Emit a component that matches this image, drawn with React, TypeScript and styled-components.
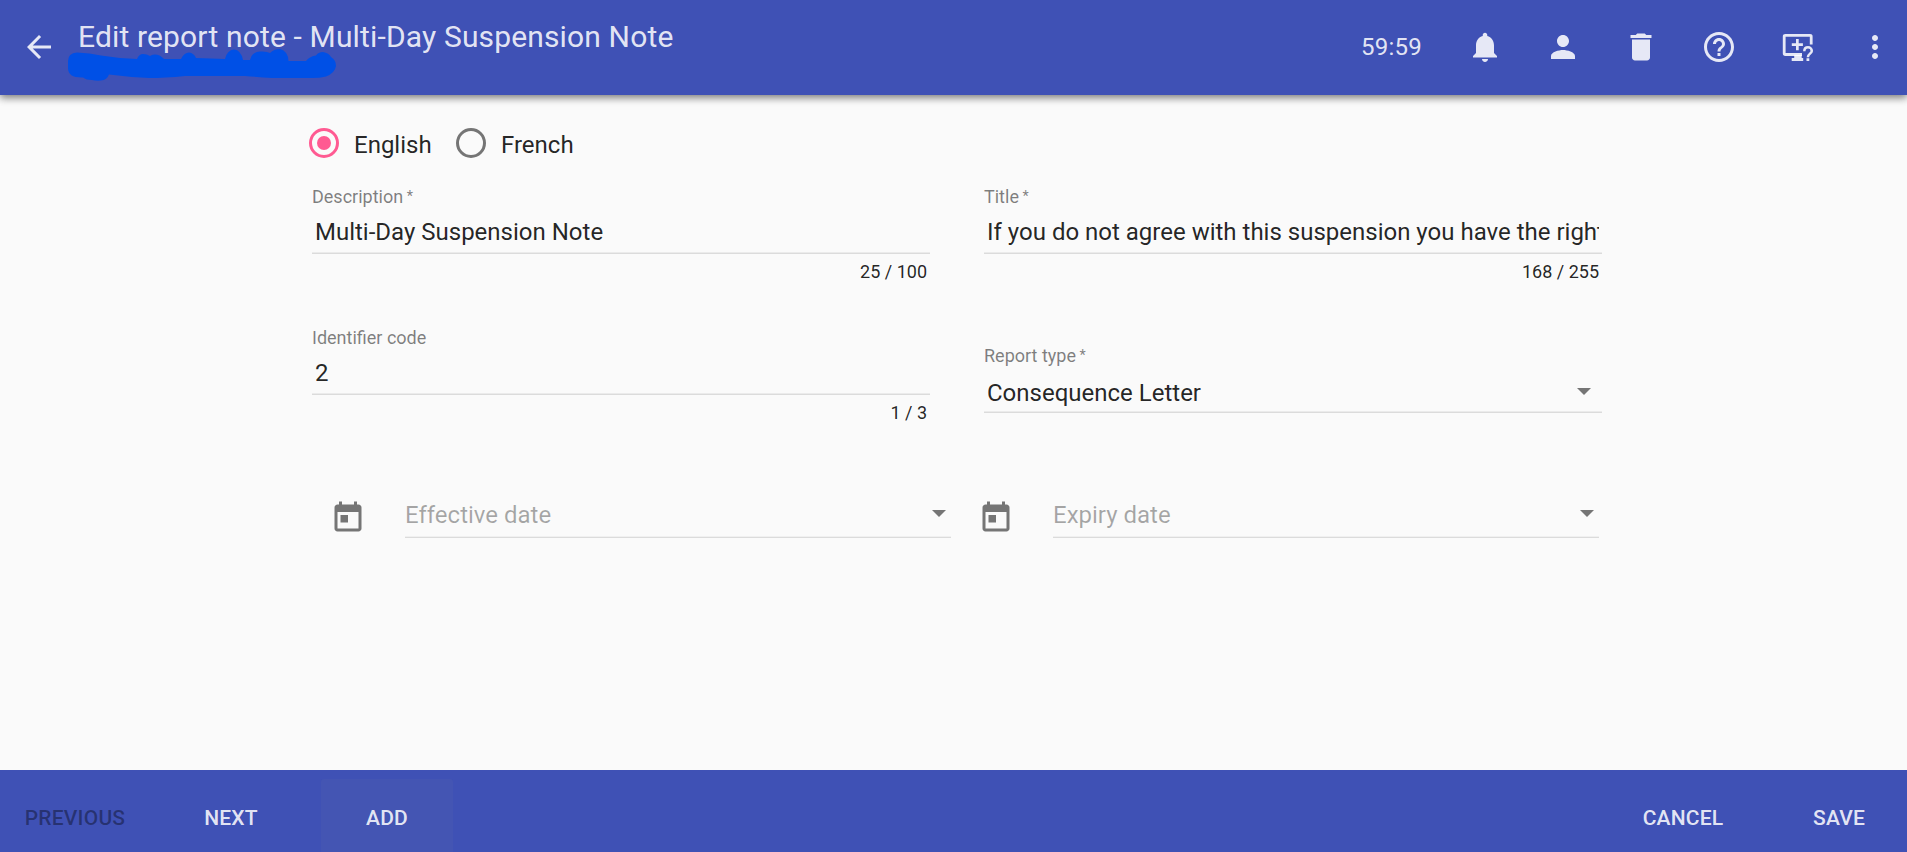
import React from "react";
import styled, { createGlobalStyle } from "styled-components";

const GlobalStyle = createGlobalStyle`
  * { box-sizing: border-box; }
  html, body { margin: 0; padding: 0; }
  body { font-family: Roboto, "Liberation Sans", sans-serif; background: #fafafa; overflow: hidden; }
`;

const Page = styled.div`
  display: flex;
  flex-direction: column;
  height: 852px;
  background: #fafafa;
  color: rgba(0, 0, 0, 0.87);
  overflow: hidden;
`;

const Toolbar = styled.header`
  position: relative;
  z-index: 1;
  display: flex;
  flex: 0 0 95px;
  padding: 0 14px 0 21px;
  background: #3f51b5;
  color: rgba(255, 255, 255, 0.87);
  box-shadow: 0 2px 8px rgba(0, 0, 0, 0.4), 0 3px 8px rgba(0, 0, 0, 0.2);
`;

const IconButton = styled.button`
  display: flex;
  flex: none;
  width: 36px;
  height: 36px;
  margin: 29px 0 0;
  padding: 0;
  border: 0;
  background: none;
  color: inherit;
`;

const Icon = styled.svg`
  display: block;
  width: 36px;
  height: 36px;
  fill: currentColor;
`;

const TitleBlock = styled.div`
  position: relative;
  flex: 1;
  padding: 19px 0 0 21px;
`;

const Title = styled.h1`
  margin: 0;
  font-size: 30px;
  font-weight: 400;
  line-height: 36px;
  letter-spacing: 0.15px;
  white-space: nowrap;
`;

const Scribble = styled.svg`
  position: absolute;
  left: 8px;
  top: 46px;
  width: 280px;
  height: 40px;
  fill: #0050e6;
`;

const Actions = styled.div`
  display: flex;
  gap: 42px;
`;

const Timer = styled.span`
  padding-top: 32px;
  font-size: 24px;
  line-height: 30px;
  letter-spacing: 0.24px;
  margin-right: 3px;
`;

const Main = styled.main`
  flex: 1;
  padding: 33px 305px 0 309px;
`;

const RadioGroup = styled.div`
  display: flex;
  height: 32px;
`;

const RadioOption = styled.label<{ $width: number }>`
  display: flex;
  width: ${(p) => p.$width}px;
  gap: 15px;
  font-size: 24px;
  line-height: 30px;
`;

const RadioRing = styled.span<{ $checked?: boolean }>`
  display: flex;
  align-items: center;
  justify-content: center;
  width: 30px;
  height: 30px;
  border: 3px solid ${(p) => (p.$checked ? "#ff5a92" : "#757575")};
  border-radius: 50%;
`;

const RadioDot = styled.span`
  width: 14px;
  height: 14px;
  border-radius: 50%;
  background: #ff5a92;
`;

const RadioText = styled.span`
  padding-top: 2px;
`;

const FieldGrid = styled.div`
  display: grid;
  grid-template-columns: 618px 618px;
  grid-template-rows: 141px 141px;
  column-gap: 54px;
  margin: 27px 0 0 3px;
`;

const FieldBox = styled.div<{ $offset?: number }>`
  padding-top: ${(p) => p.$offset ?? 0}px;
`;

const FieldLabel = styled.div`
  height: 20px;
  font-size: 18px;
  line-height: 20px;
  color: rgba(0, 0, 0, 0.5);
`;

const Asterisk = styled.span`
  font-size: 14.6px;
  line-height: 18px;
  vertical-align: top;
`;

const FieldValue = styled.div<{ $select?: boolean }>`
  display: flex;
  justify-content: space-between;
  height: 47px;
  padding-top: ${(p) => (p.$select ? 9 : 7)}px;
  border-bottom: 1px solid rgba(0, 0, 0, 0.12);
  box-shadow: inset 0 -1px 0 rgba(0, 0, 0, 0.06);
  font-size: 24px;
  line-height: 36px;
`;

const ValueText = styled.span`
  flex: 1;
  margin: 0 3px;
  overflow: hidden;
  white-space: nowrap;
`;

const Counter = styled.div`
  padding: 8px 3px 0 0;
  font-size: 18px;
  line-height: 20px;
  text-align: right;
`;

const Arrow = styled.span<{ $top: number; $right: number; $half: number }>`
  width: 0;
  height: 0;
  margin: ${(p) => p.$top}px ${(p) => p.$right}px 0 0;
  border-left: ${(p) => p.$half}px solid transparent;
  border-right: ${(p) => p.$half}px solid transparent;
  border-top: 7px solid #757575;
`;

const DateRow = styled.div`
  display: flex;
  gap: 27px;
  padding: 28px 0 0 21px;
`;

const DatePicker = styled.div`
  display: flex;
  gap: 39px;
  color: #757575;
`;

const CalendarIcon = styled(Icon)`
  margin-top: 3px;
`;

const DateInput = styled.div`
  display: flex;
  justify-content: space-between;
  width: 546px;
  height: 41px;
  border-bottom: 1px solid rgba(0, 0, 0, 0.12);
  box-shadow: inset 0 -1px 0 rgba(0, 0, 0, 0.04);
  color: rgba(0, 0, 0, 0.34);
  font-size: 24px;
  line-height: 36px;
`;

const Footer = styled.footer`
  display: flex;
  justify-content: space-between;
  flex: 0 0 82px;
  padding: 9px 2px 0 9px;
  background: #3f51b5;
  overflow: hidden;
`;

const ButtonGroup = styled.div`
  display: flex;
  gap: 24px;
`;

const TextButton = styled.button<{ $focused?: boolean }>`
  width: 132px;
  height: 78px;
  padding: 0;
  border: 0;
  border-radius: 3px;
  background: ${(p) => (p.$focused ? "rgba(158, 158, 158, 0.06)" : "transparent")};
  color: rgba(255, 255, 255, 0.87);
  font: 500 21px/78px Roboto, "Liberation Sans", sans-serif;
  letter-spacing: 0.21px;
  &:disabled { color: rgba(0, 0, 0, 0.38); }
`;

const TOOLBAR_ICONS: Record<string, string> = {
  notifications:
    "M12 22c1.1 0 2-.9 2-2h-4c0 1.1.89 2 2 2zm6-6v-5c0-3.07-1.64-5.64-4.5-6.32V4c0-.83-.67-1.5-1.5-1.5s-1.5.67-1.5 1.5v.68C7.63 5.36 6 7.92 6 11v5l-2 2v1h16v-1l-2-2z",
  person:
    "M12 12c2.21 0 4-1.79 4-4s-1.79-4-4-4-4 1.79-4 4 1.79 4 4 4zm0 2c-2.67 0-8 1.34-8 4v2h16v-2c0-2.66-5.33-4-8-4z",
  remove: "M6 19c0 1.1.9 2 2 2h8c1.1 0 2-.9 2-2V7H6v12zM19 4h-3.5l-1-1h-5l-1 1H5v2h14V4z",
  help:
    "M11 18h2v-2h-2v2zm1-16C6.48 2 2 6.48 2 12s4.48 10 10 10 10-4.48 10-10S17.52 2 12 2zm0 18c-4.41 0-8-3.59-8-8s3.59-8 8-8 8 3.59 8 8-3.59 8-8 8zm0-14c-2.21 0-4 1.79-4 4h2c0-1.1.9-2 2-2s2 .9 2 2c0 2-3 1.75-3 5h2c0-2.25 3-2.5 3-5 0-2.21-1.79-4-4-4z",
};

function ToolbarIcon({ name }: { name: string }) {
  return (
    <IconButton aria-label={name}>
      <Icon viewBox="0 0 24 24">
        <path d={TOOLBAR_ICONS[name]} />
      </Icon>
    </IconButton>
  );
}

function Label({ text, required }: { text: string; required?: boolean }) {
  return (
    <FieldLabel>
      {text}
      {required && <Asterisk> *</Asterisk>}
    </FieldLabel>
  );
}

function TextField(props: { label: string; value: string; count: string; required?: boolean }) {
  return (
    <FieldBox>
      <Label text={props.label} required={props.required} />
      <FieldValue>
        <ValueText>{props.value}</ValueText>
      </FieldValue>
      <Counter>{props.count}</Counter>
    </FieldBox>
  );
}

function DateField({ placeholder }: { placeholder: string }) {
  return (
    <DatePicker>
      <CalendarIcon viewBox="0 0 24 24">
        <path d="M19 3h-1V1h-2v2H8V1H6v2H5c-1.11 0-1.99.9-1.99 2L3 19c0 1.1.89 2 2 2h14c1.1 0 2-.9 2-2V5c0-1.1-.9-2-2-2zm0 16H5V8h14v11zM7 10h5v5H7z" />
      </CalendarIcon>
      <DateInput>
        {placeholder}
        <Arrow $top={13} $right={5} $half={7.5} />
      </DateInput>
    </DatePicker>
  );
}

export default function App() {
  return (
    <>
      <GlobalStyle />
      <Page>
        <Toolbar>
          <IconButton aria-label="Back">
            <Icon viewBox="0 0 24 24">
              <path d="M20 11H7.83l5.59-5.59L12 4l-8 8 8 8 1.41-1.41L7.83 13H20v-2z" />
            </Icon>
          </IconButton>
          <TitleBlock>
            <Title>Edit report note - Multi-Day Suspension Note</Title>
            <Scribble viewBox="65 46 280 40">
              <path d="M68 61 Q68 53 77 52.5 Q90 53 101 55.5 Q119 58.5 137 59 Q139 54 143 54 Q147 54 150 56 Q157 52 164 59 L181 59 Q184 52.500 189 52.500 Q194 53 196 58 L225 59 Q227 50 234 49.500 Q241 50 243 60 L250 60 Q252 52 260 51.500 Q267 51 270 53 Q274 49 280 49 Q288 51 288.500 61 L306 61 Q310 56 316 55.500 Q318 52 323 52 Q329 53 331 57 Q336 60 336 66 Q335 73 326 76.500 Q320 78 312 78 L272 78 Q258 77 245 76 L185 76 Q165 78 149 78 Q128 77 109 74.500 Q107 80 101 80.500 Q96 81 92 80 Q86 80 83 77.500 Q68 78 68 68 Z" />
            </Scribble>
          </TitleBlock>
          <Actions>
            <Timer>59:59</Timer>
            <ToolbarIcon name="notifications" />
            <ToolbarIcon name="person" />
            <ToolbarIcon name="remove" />
            <ToolbarIcon name="help" />
            <IconButton aria-label="Screen help">
              <Icon viewBox="0 0 36 36">
                <path
                  d="M32.2 15.500V7.500Q32.200 6.300 31 6.300H6.400Q5.200 6.300 5.200 7.500V24.300Q5.200 25.500 6.400 25.500H23"
                  fill="none"
                  stroke="currentColor"
                  strokeWidth="2.8"
                />
                <path d="M17 10h2.700v4.200h4.200v2.700h-4.200v4.300H17v-4.300h-4.200v-2.700H17zM15.200 26h7.500v3h1.500v3H12.700v-3h2.500zM27.500 29.300h2.800v2.700h-2.800z" />
                <path
                  d="M25.300 22.200C25.300 19.800 26.800 18.300 29 18.300S32.800 19.900 32.800 21.900C32.800 24.500 28.900 24.900 28.900 28.200"
                  fill="none"
                  stroke="currentColor"
                  strokeWidth="2.5"
                />
              </Icon>
            </IconButton>
            <IconButton aria-label="More">
              <Icon viewBox="0 0 24 24">
                <path d="M12 8c1.100 0 2-.9 2-2s-.9-2-2-2-2 .9-2 2 .9 2 2 2zm0 2c-1.100 0-2 .9-2 2s.9 2 2 2 2-.9 2-2-.9-2-2-2zm0 6c-1.100 0-2 .9-2 2s.9 2 2 2 2-.9 2-2-.9-2-2-2z" />
              </Icon>
            </IconButton>
          </Actions>
        </Toolbar>
        <Main>
          <RadioGroup>
            <RadioOption $width={147}>
              <RadioRing $checked>
                <RadioDot />
              </RadioRing>
              <RadioText>English</RadioText>
            </RadioOption>
            <RadioOption $width={147}>
              <RadioRing />
              <RadioText>French</RadioText>
            </RadioOption>
          </RadioGroup>
          <FieldGrid>
            <TextField label="Description" value="Multi-Day Suspension Note" count="25 / 100" required />
            <TextField
              label="Title"
              value="If you do not agree with this suspension you have the right"
              count="168 / 255"
              required
            />
            <TextField label="Identifier code" value="2" count="1 / 3" />
            <FieldBox $offset={18}>
              <Label text="Report type" required />
              <FieldValue $select>
                <ValueText>Consequence Letter</ValueText>
                <Arrow $top={13} $right={11} $half={7} />
              </FieldValue>
            </FieldBox>
          </FieldGrid>
          <DateRow>
            <DateField placeholder="Effective date" />
            <DateField placeholder="Expiry date" />
          </DateRow>
        </Main>
        <Footer>
          <ButtonGroup>
            <TextButton disabled>PREVIOUS</TextButton>
            <TextButton>NEXT</TextButton>
            <TextButton $focused>ADD</TextButton>
          </ButtonGroup>
          <ButtonGroup>
            <TextButton>CANCEL</TextButton>
            <TextButton>SAVE</TextButton>
          </ButtonGroup>
        </Footer>
      </Page>
    </>
  );
}
